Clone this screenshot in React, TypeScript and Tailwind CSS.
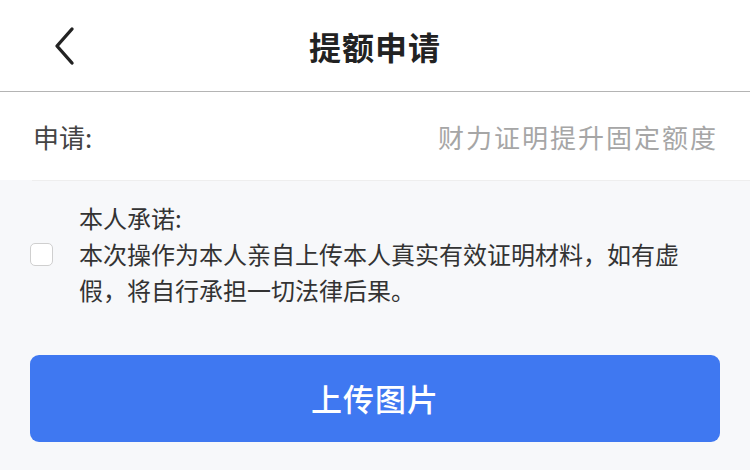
import { useState } from "react";

export default function App() {
  const [agreed, setAgreed] = useState(false);

  return (
    <div
      className="w-[750px] h-[470px] bg-[#f7f8fa] overflow-hidden"
      style={{ fontFamily: '"Noto Sans CJK SC", "Noto Sans", sans-serif' }}
    >
      {/* header */}
      <div className="relative h-[92px] bg-white border-b border-[#b4b4b4] flex items-center justify-center">
        <button className="absolute left-[44px] top-[22px] w-[40px] h-[48px] flex items-center justify-center">
          <svg width="24" height="40" viewBox="0 0 24 40" fill="none">
            <path d="M20 3 L5 20 L20 37" stroke="#222" strokeWidth="3.4" strokeLinecap="round" strokeLinejoin="round" />
          </svg>
        </button>
        <h1 className="text-[32px] font-bold text-[#222] tracking-[1px] leading-none">提额申请</h1>
      </div>

      {/* apply row */}
      <div className="h-[88px] bg-white flex items-center justify-between pl-[33px] pr-[32px]">
        <span className="text-[26px] text-[#444]">申请:</span>
        <span className="text-[26px] text-[#a6a6a6] tracking-[2px]">财力证明提升固定额度</span>
      </div>

      <div className="ml-[32px] border-t border-[#eeeeee]" />

      {/* promise */}
      <div className="flex items-center pl-[30px] pr-[40px] pt-[19px]">
        <button
          onClick={() => setAgreed(!agreed)}
          className={`w-[23px] h-[23px] shrink-0 rounded-[5px] border ${agreed ? "bg-[#3f78f1] border-[#3f78f1]" : "bg-white border-[#cfcfcf]"}`}
        />
        <div className="ml-[26px] text-[24px] leading-[36px] text-[#333]">
          <p>本人承诺:</p>
          <p>本次操作为本人亲自上传本人真实有效证明材料，如有虚假，将自行承担一切法律后果。</p>
        </div>
      </div>

      <div className="px-[30px] pt-[47px]">
        <button className="w-full h-[87px] rounded-[9px] bg-[#3f78f1] text-white text-[31px] font-medium tracking-[1px]">
          上传图片
        </button>
      </div>
    </div>
  );
}
